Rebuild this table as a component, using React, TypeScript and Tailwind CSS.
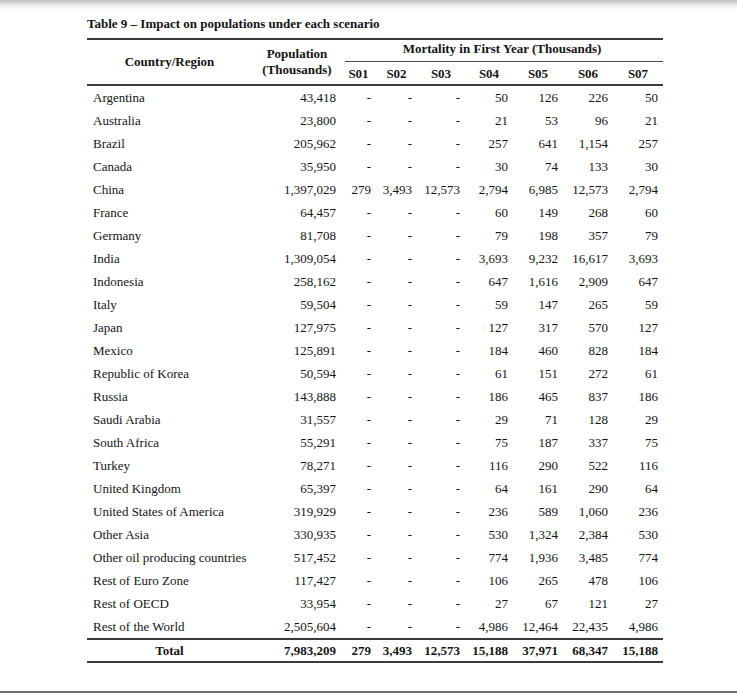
import React from "react";

type Row = [string, string, string, string, string, string, string, string, string];

const rows: Row[] = [
  ["Argentina", "43,418", "-", "-", "-", "50", "126", "226", "50"],
  ["Australia", "23,800", "-", "-", "-", "21", "53", "96", "21"],
  ["Brazil", "205,962", "-", "-", "-", "257", "641", "1,154", "257"],
  ["Canada", "35,950", "-", "-", "-", "30", "74", "133", "30"],
  ["China", "1,397,029", "279", "3,493", "12,573", "2,794", "6,985", "12,573", "2,794"],
  ["France", "64,457", "-", "-", "-", "60", "149", "268", "60"],
  ["Germany", "81,708", "-", "-", "-", "79", "198", "357", "79"],
  ["India", "1,309,054", "-", "-", "-", "3,693", "9,232", "16,617", "3,693"],
  ["Indonesia", "258,162", "-", "-", "-", "647", "1,616", "2,909", "647"],
  ["Italy", "59,504", "-", "-", "-", "59", "147", "265", "59"],
  ["Japan", "127,975", "-", "-", "-", "127", "317", "570", "127"],
  ["Mexico", "125,891", "-", "-", "-", "184", "460", "828", "184"],
  ["Republic of Korea", "50,594", "-", "-", "-", "61", "151", "272", "61"],
  ["Russia", "143,888", "-", "-", "-", "186", "465", "837", "186"],
  ["Saudi Arabia", "31,557", "-", "-", "-", "29", "71", "128", "29"],
  ["South Africa", "55,291", "-", "-", "-", "75", "187", "337", "75"],
  ["Turkey", "78,271", "-", "-", "-", "116", "290", "522", "116"],
  ["United Kingdom", "65,397", "-", "-", "-", "64", "161", "290", "64"],
  ["United States of America", "319,929", "-", "-", "-", "236", "589", "1,060", "236"],
  ["Other Asia", "330,935", "-", "-", "-", "530", "1,324", "2,384", "530"],
  ["Other oil producing countries", "517,452", "-", "-", "-", "774", "1,936", "3,485", "774"],
  ["Rest of Euro Zone", "117,427", "-", "-", "-", "106", "265", "478", "106"],
  ["Rest of OECD", "33,954", "-", "-", "-", "27", "67", "121", "27"],
  ["Rest of the World", "2,505,604", "-", "-", "-", "4,986", "12,464", "22,435", "4,986"],
];

const total: Row = ["Total", "7,983,209", "279", "3,493", "12,573", "15,188", "37,971", "68,347", "15,188"];

const grid = "grid grid-cols-[171px_83px_35px_41px_48px_48px_50px_50px_50px]";

export default function App() {
  return (
    <div
      className="w-[737px] h-[693px] bg-white flex flex-col text-[#141414]"
      style={{ fontFamily: '"Liberation Serif", "Times New Roman", serif' }}
    >
      <div className="h-[10px] bg-gradient-to-b from-[#bdbdbd] via-[#ececec] to-white" />
      <div className="mt-[6px] pl-[87px] h-[16px] leading-[16px] text-[13px] font-bold">
        Table 9 – Impact on populations under each scenario
      </div>
      <div className="mt-[6px] ml-[87px] w-[576px]">
        <div className="border-t-2 border-[#3a3a3a]" />
        {/* header */}
        <div className={`${grid} grid-rows-[22px_22px] text-[13px] font-bold border-b-2 border-[#3a3a3a]`}>
          <div className="row-span-2 flex items-center justify-center leading-[16px] pr-[6px]">Country/Region</div>
          <div className="row-span-2 flex flex-col items-center justify-center leading-[16px] pr-[5px]">
            <span>Population</span>
            <span>(Thousands)</span>
          </div>
          <div className="col-span-7 flex flex-col">
            <div className="flex-1 flex items-start justify-center pt-[1px] leading-[16px]">
              Mortality in First Year (Thousands)
            </div>
            <div className="ml-[4px] border-b border-[#4a4a4a]" />
          </div>
          {["S01", "S02", "S03", "S04", "S05", "S06", "S07"].map((s) => (
            <div key={s} className="flex items-center justify-center pt-[2px] leading-[16px]">
              {s}
            </div>
          ))}
        </div>
        {/* body */}
        {rows.map((r) => (
          <div key={r[0]} className={`${grid} h-[23px] text-[13px] leading-[16px]`}>
            <div className="flex items-center pl-[6px] whitespace-nowrap">{r[0]}</div>
            {r.slice(1).map((v, i) => (
              <div key={i} className="flex items-center justify-end pr-[5px] whitespace-nowrap">
                {v}
              </div>
            ))}
          </div>
        ))}
        <div className={`${grid} h-[25px] text-[13px] leading-[16px] font-bold border-t-2 border-b-2 border-[#3a3a3a]`}>
          <div className="flex items-center justify-center pr-[6px]">{total[0]}</div>
          {total.slice(1).map((v, i) => (
            <div key={i} className="flex items-center justify-end pr-[5px] whitespace-nowrap">
              {v}
            </div>
          ))}
        </div>
      </div>
      <div className="mt-auto h-[2px] bg-[#6e6e6e]" />
    </div>
  );
}
